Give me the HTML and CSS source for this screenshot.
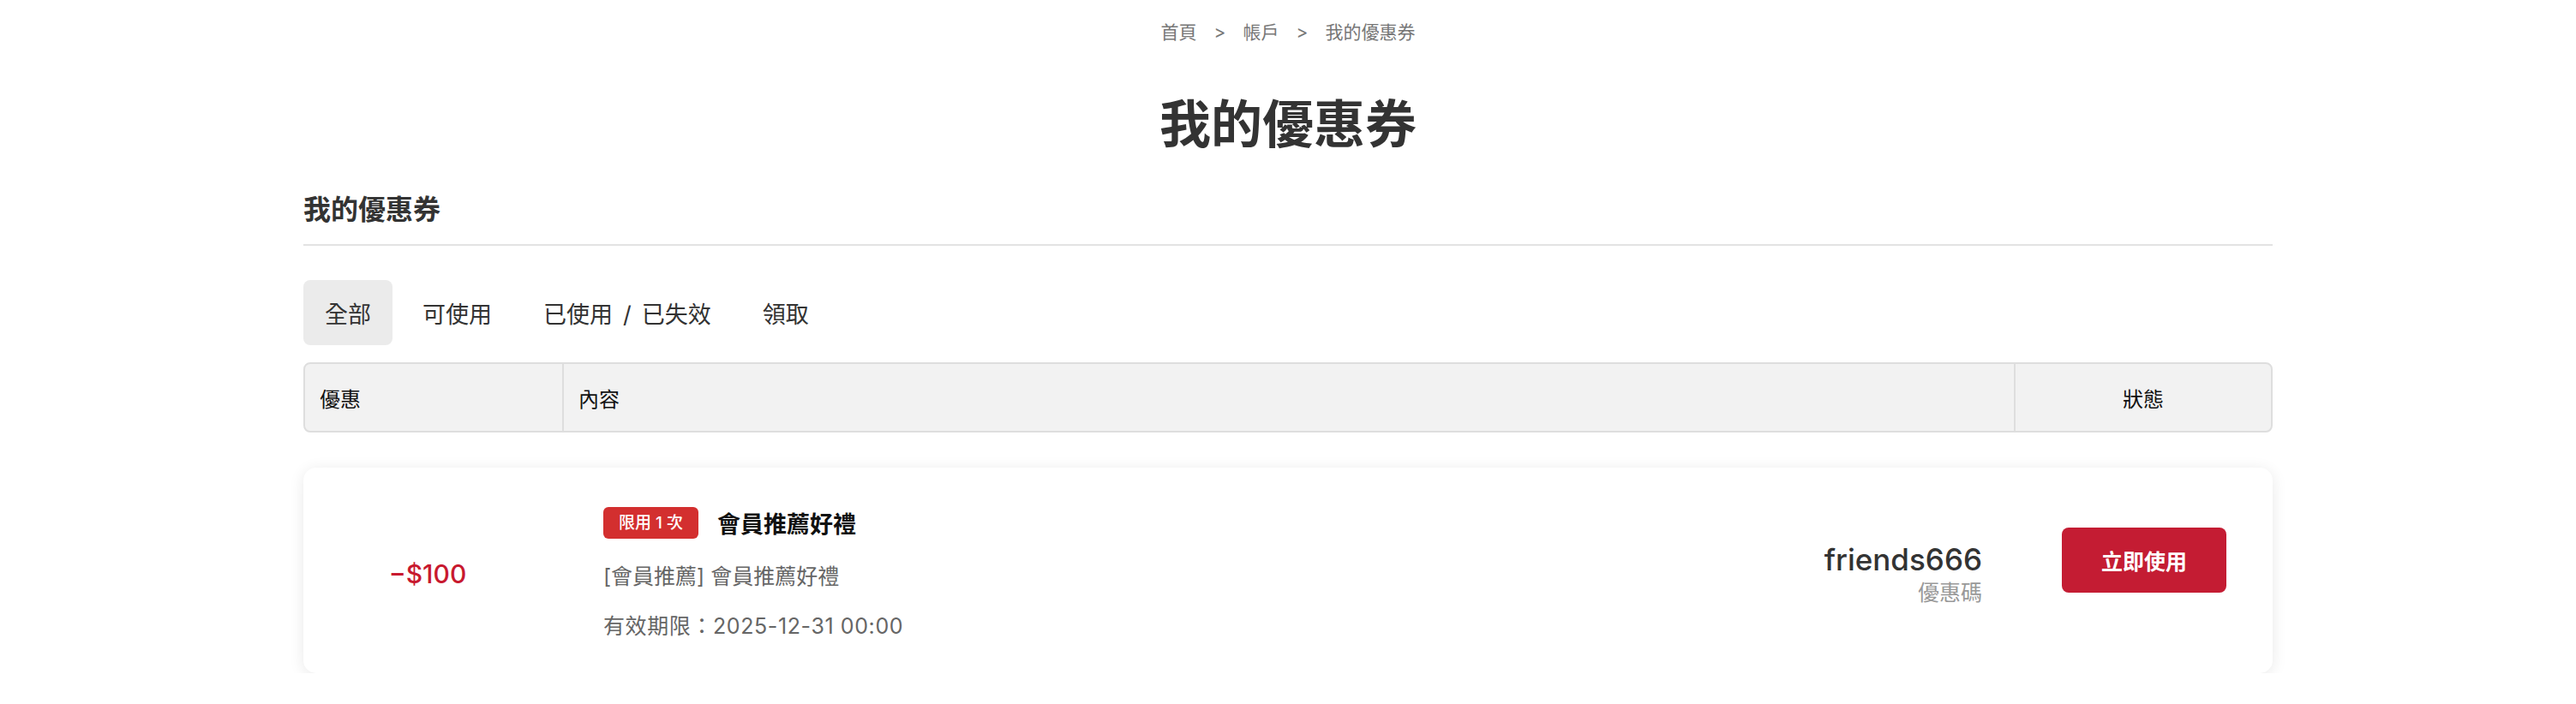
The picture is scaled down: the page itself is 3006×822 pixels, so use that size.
FILE: index.html
```html
<!DOCTYPE html>
<html lang="zh-Hant">
  <head>
    <meta charset="UTF-8" />
    <meta name="viewport" content="width=device-width, initial-scale=1.0" />
    <title>我的優惠券</title>
    <link rel="stylesheet" href="styles.css">
  </head>

  <body>
    <div class="breadcrumb">
      <span>首頁</span>
      <span class="sep">&gt;</span>
      <span>帳戶</span>
      <span class="sep">&gt;</span>
      <span>我的優惠券</span>
    </div>

    <h1 class="page-title">我的優惠券</h1>

    <div class="container">
      <h2 class="section-title">我的優惠券</h2>

      <div class="tabs">
        <button class="tab active">全部</button>
        <button class="tab">可使用</button>
        <button class="tab">已使用<span class="slash">/</span>已失效</button>
        <button class="tab">領取</button>
      </div>

      <div class="table-head">
        <div class="th">優惠</div>
        <div class="th">內容</div>
        <div class="th center">狀態</div>
      </div>

      <div class="coupon-card">
        <div class="coupon-amount">−$100</div>
        <div class="coupon-info">
          <div class="coupon-title-row">
            <span class="badge">限用 1 次</span>
            <span class="coupon-name">會員推薦好禮</span>
          </div>
          <div class="coupon-desc">[會員推薦] 會員推薦好禮</div>
          <div class="coupon-date">有效期限：2025-12-31 00:00</div>
        </div>
        <div class="coupon-code">
          <div class="code">friends666</div>
          <div class="code-label">優惠碼</div>
        </div>
        <div class="coupon-status">
          <button class="use-btn">立即使用</button>
        </div>
      </div>
    </div>
  </body>
</html>
```

FILE: styles.css
```css
body {
  margin: 0;
  background: #fff;
  color: #333;
  font-family: Inter, "Noto Sans CJK TC", sans-serif;
}

.breadcrumb {
  display: flex;
  justify-content: center;
  gap: 20px;
  padding-top: 23px;
  font-size: 21px;
  line-height: 30px;
  color: #777;
}

.page-title {
  margin: 52px 0 0;
  text-align: center;
  font-size: 60px;
  line-height: 80px;
  font-weight: 700;
  color: #333;
}

.container {
  max-width: 2298px;
  margin: 0 auto;
}

.section-title {
  margin: 36px 0 0;
  padding-bottom: 16px;
  border-bottom: 2px solid #e3e3e3;
  font-size: 32px;
  line-height: 48px;
  font-weight: 700;
  color: #333;
}

.tabs {
  display: flex;
  gap: 10px;
  margin-top: 40px;
}

.tab {
  padding: 0 25px;
  height: 76px;
  border: none;
  border-radius: 8px;
  background: transparent;
  font-family: inherit;
  font-size: 27px;
  color: #333;
  cursor: pointer;
}

.tab.active {
  background: #ebebeb;
}

.slash {
  margin: 0 12px;
}

.table-head {
  display: grid;
  grid-template-columns: 300px 1fr 300px;
  margin-top: 20px;
  height: 82px;
  box-sizing: border-box;
  border: 2px solid #dedede;
  border-radius: 8px;
  background: #f2f2f2;
}

.th {
  display: flex;
  align-items: center;
  padding: 0 17px;
  font-size: 24px;
  color: #111;
}

.th + .th {
  border-left: 2px solid #dedede;
}

.th.center {
  justify-content: center;
}

.coupon-card {
  display: grid;
  grid-template-columns: 300px 1fr auto 300px;
  align-items: center;
  margin-top: 41px;
  padding: 44px 0 37px;
  border-radius: 15px;
  background: #fff;
  box-shadow: 0 3px 18px rgba(0, 0, 0, 0.09);
}

.coupon-amount {
  padding-right: 10px;
  text-align: center;
  font-size: 30px;
  font-weight: 500;
  color: #c8192f;
}

.coupon-info {
  padding-left: 50px;
}

.coupon-title-row {
  display: flex;
  align-items: center;
  height: 40px;
}

.badge {
  padding: 0 18px;
  height: 37px;
  line-height: 37px;
  border-radius: 6px;
  background: #d32f2f;
  color: #fff;
  font-size: 19px;
  font-weight: 500;
}

.coupon-name {
  margin-left: 22px;
  font-size: 27px;
  font-weight: 700;
  color: #111;
}

.coupon-desc,
.coupon-date {
  font-size: 25px;
  line-height: 36px;
  color: #666;
}

.coupon-desc {
  margin-top: 25px;
}

.coupon-date {
  margin-top: 22px;
  letter-spacing: 0.6px;
}

.coupon-code {
  padding-right: 39px;
  text-align: right;
}

.code {
  font-size: 35px;
  line-height: 44px;
  font-weight: 500;
  color: #333;
}

.code-label {
  font-size: 25px;
  line-height: 34px;
  color: #999;
}

.coupon-status {
  display: flex;
  justify-content: center;
  margin-bottom: 32px;
}

.use-btn {
  width: 192px;
  height: 76px;
  border: none;
  border-radius: 8px;
  background: #c41c33;
  color: #fff;
  font-family: inherit;
  font-size: 25px;
  font-weight: 700;
  cursor: pointer;
}
```
